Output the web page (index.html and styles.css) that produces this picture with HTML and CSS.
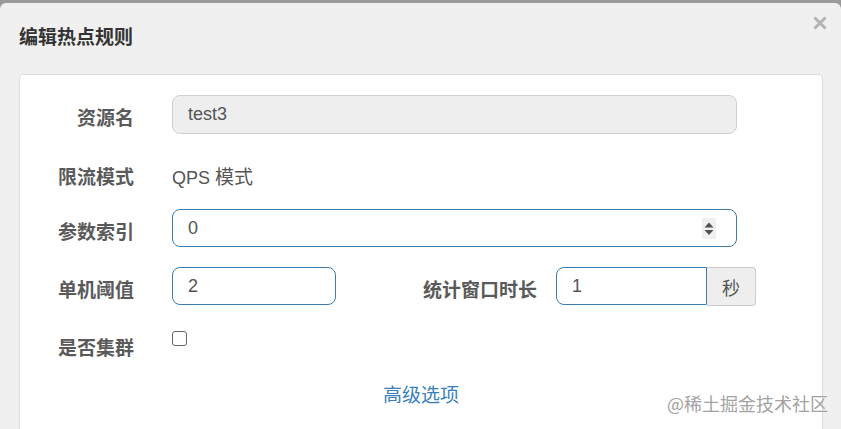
FILE: index.html
```html
<!DOCTYPE html>
<html lang="zh-CN">
<head>
<meta charset="utf-8">
<title>编辑热点规则</title>
<link rel="stylesheet" href="styles.css">
</head>
<body>
<div class="modal">
  <div class="modal-header">
    <h4 class="modal-title">编辑热点规则</h4>
    <svg class="close" width="14" height="16" viewBox="0 0 14 16" aria-label="关闭">
      <path d="M1.5 2.5 L12.5 13.5 M12.5 2.5 L1.5 13.5" stroke="#b3b3b3" stroke-width="3" stroke-linecap="butt" fill="none"/>
    </svg>
  </div>
  <div class="panel">
    <div class="form">
      <div class="row row-input1">
        <div class="label">资源名</div>
        <div class="field field-readonly field-wide">test3</div>
      </div>
      <div class="row row-static">
        <div class="label">限流模式</div>
        <div class="static">QPS <span class="static-cjk">模式</span></div>
      </div>
      <div class="row row-input">
        <div class="label">参数索引</div>
        <div class="field field-wide field-spin">
          <span>0</span>
          <svg class="spinner" width="14" height="21" viewBox="0 0 14 21">
            <rect x="0" y="0" width="14" height="21" fill="#efefef"/>
            <path d="M2.5 9.5 L7 4.5 L11.5 9.5 Z" fill="#505050"/>
            <path d="M2.5 12 L7 17 L11.5 12 Z" fill="#505050"/>
          </svg>
        </div>
      </div>
      <div class="row row-input">
        <div class="label">单机阈值</div>
        <div class="field field-short">2</div>
        <div class="label label-second">统计窗口时长</div>
        <div class="input-group">
          <div class="field field-group">1</div>
          <div class="addon">秒</div>
        </div>
      </div>
      <div class="row row-check">
        <div class="label">是否集群</div>
        <div class="checkbox"></div>
      </div>
      <div class="more"><a class="link">高级选项</a></div>
    </div>
  </div>
</div>
<div class="watermark">@稀土掘金技术社区</div>
</body>
</html>
```

FILE: styles.css
```css
html, body {
  margin: 0;
  padding: 0;
}
body {
  width: 841px;
  height: 429px;
  overflow: hidden;
  background: #9a9a9a;
  font-family: "Liberation Sans", "Noto Sans CJK SC", sans-serif;
  color: #555;
  position: relative;
}
.modal {
  margin-top: 3px;
  height: 426px;
  background: #f0f0f0;
  border-radius: 6px 6px 0 0;
  overflow: hidden;
}
.modal-header {
  height: 71px;
  box-sizing: border-box;
  display: flex;
  justify-content: space-between;
  align-items: flex-start;
  padding: 0 14px 0 19px;
}
.modal-title {
  margin: 21px 0 0 0;
  font-size: 19px;
  line-height: 24px;
  font-weight: 700;
  color: #333;
  font-family: "Noto Sans CJK SC", sans-serif;
}
.close {
  margin-top: 12px;
  display: block;
}
.panel {
  margin: 0 18px 0 19px;
  height: 420px;
  background: #fff;
  border: 1px solid #dcdcdc;
  border-radius: 4px;
  box-sizing: border-box;
  padding-top: 20px;
}
.form {
  display: flex;
  flex-direction: column;
  gap: 20px;
}
.row {
  display: flex;
  align-items: flex-start;
}
.row-input1 { height: 39px; }
.row-static { height: 35px; }
.row-input { height: 38px; }
.row-check { height: 39px; }
.label {
  width: 114px;
  flex: none;
  margin-right: 38px;
  text-align: right;
  font-family: "Noto Sans CJK SC", sans-serif;
  font-size: 19px;
  font-weight: 700;
  line-height: 44px;
  color: #5a5a5a;
  white-space: nowrap;
}
.label-second {
  width: 201px;
  margin-right: 19px;
  margin-left: 0;
}
.static {
  font-size: 18px;
  line-height: 44px;
  color: #555;
}
.static-cjk {
  font-family: "Noto Sans CJK SC", sans-serif;
  font-size: 19px;
}
.field {
  box-sizing: border-box;
  height: 38px;
  border: 1px solid #3f7cae;
  border-radius: 8px;
  background: #fff;
  padding: 0 15px;
  font-size: 18px;
  color: #555;
  display: flex;
  align-items: center;
}
.field-wide { width: 565px; }
.field-readonly {
  height: 39px;
  background: #eee;
  border-color: #cfcfcf;
}
.field-spin {
  justify-content: space-between;
  padding-right: 20px;
}
.spinner { display: block; }
.field-short {
  width: 164px;
  flex: none;
}
.input-group {
  display: flex;
  flex: none;
}
.field-group {
  width: 151px;
  border-radius: 8px 0 0 8px;
}
.addon {
  box-sizing: border-box;
  width: 49px;
  height: 39px;
  background: #eee;
  border: 1px solid #ccc;
  border-left: none;
  border-radius: 0 4px 4px 0;
  font-size: 18px;
  font-family: "Noto Sans CJK SC", sans-serif;
  color: #555;
  display: flex;
  align-items: center;
  justify-content: center;
}
.checkbox {
  width: 15px;
  height: 15px;
  box-sizing: border-box;
  margin-top: 6px;
  border: 1px solid #666;
  border-radius: 3px;
  background: #fff;
}
.more {
  text-align: center;
  line-height: 20px;
}
.link {
  font-family: "Noto Sans CJK SC", sans-serif;
  font-size: 19px;
  color: #3a7fbb;
  text-decoration: none;
}
.watermark {
  position: absolute;
  left: 667px;
  top: 391px;
  font-family: "Noto Sans CJK SC", sans-serif;
  font-size: 18px;
  line-height: 24px;
  color: #a3a3a3;
  white-space: nowrap;
}
```
